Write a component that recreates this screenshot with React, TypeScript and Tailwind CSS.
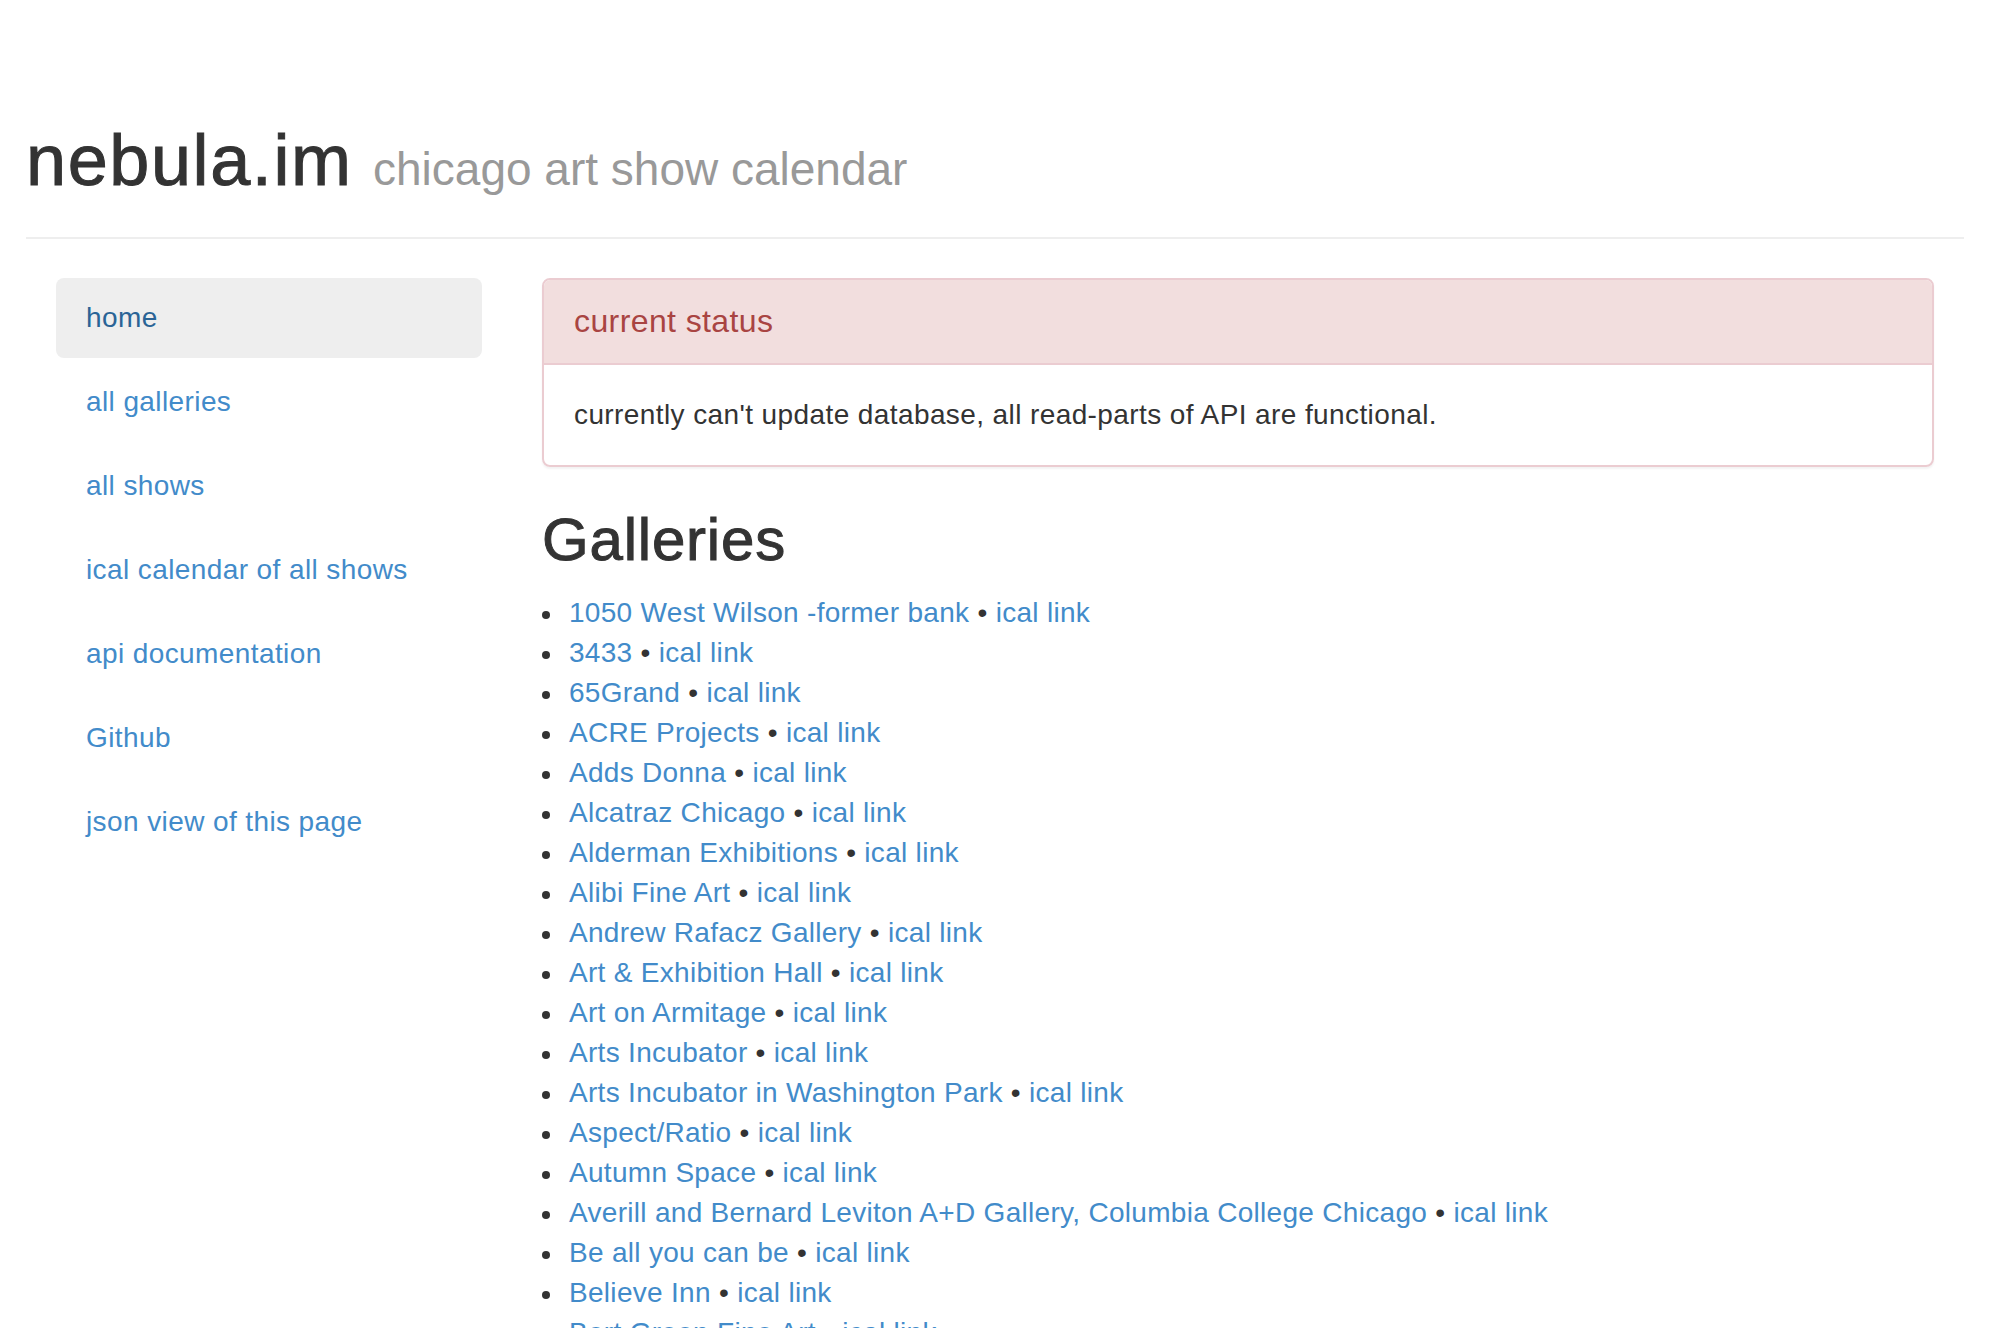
const navItems = [
  { label: "home", active: true },
  { label: "all galleries" },
  { label: "all shows" },
  { label: "ical calendar of all shows" },
  { label: "api documentation" },
  { label: "Github" },
  { label: "json view of this page" },
];

const galleries = [
  "1050 West Wilson -former bank",
  "3433",
  "65Grand",
  "ACRE Projects",
  "Adds Donna",
  "Alcatraz Chicago",
  "Alderman Exhibitions",
  "Alibi Fine Art",
  "Andrew Rafacz Gallery",
  "Art & Exhibition Hall",
  "Art on Armitage",
  "Arts Incubator",
  "Arts Incubator in Washington Park",
  "Aspect/Ratio",
  "Autumn Space",
  "Averill and Bernard Leviton A+D Gallery, Columbia College Chicago",
  "Be all you can be",
  "Believe Inn",
  "Bert Green Fine Art",
  "Blanc Gallery",
  "Bridgeport Art Center",
];

export default function App() {
  return (
    <div className="min-h-screen bg-white font-['Liberation_Sans',Helvetica,Arial,sans-serif] text-[28px] leading-[40px] tracking-[0.4px] text-[#333]">
      <div className="px-[26px]">
        <header className="pt-[121px] pb-[28px] border-b-2 border-[#eeeeee]">
          <h1 className="text-[72px] leading-[79px] font-normal">
            <span className="tracking-[1.6px] [-webkit-text-stroke:1px_#333]">nebula.im</span>{" "}
            <small className="text-[46px] tracking-normal text-[#999]">
              chicago art show calendar
            </small>
          </h1>
        </header>

        <div className="flex mt-[39px]">
          <nav className="w-[486px] shrink-0 px-[30px]">
            <ul className="flex flex-col gap-[4px]">
              {navItems.map((item) => (
                <li key={item.label}>
                  <a
                    href="#"
                    className={
                      item.active
                        ? "block rounded-[8px] bg-[#eeeeee] px-[30px] py-[20px] text-[#2a6496]"
                        : "block rounded-[8px] px-[30px] py-[20px] text-[#428bca]"
                    }
                  >
                    {item.label}
                  </a>
                </li>
              ))}
            </ul>
          </nav>

          <main className="flex-1 px-[30px]">
            <div className="rounded-[8px] border-2 border-[#ebccd1] shadow-[0_2px_2px_rgba(0,0,0,0.05)]">
              <div className="rounded-t-[6px] border-b-2 border-[#ebccd1] bg-[#f2dede] px-[30px] py-[24px]">
                <h3 className="text-[32px] leading-[35px] text-[#a94442]">current status</h3>
              </div>
              <div className="px-[30px] py-[30px]">
                currently can't update database, all read-parts of API are functional.
              </div>
            </div>

            <h2 className="mt-[40px] mb-[20px] text-[60px] leading-[66px] tracking-[0.8px] [-webkit-text-stroke:1px_#333]">
              Galleries
            </h2>

            <ul className="tracking-[0.3px]">
              {galleries.map((name) => (
                <li key={name}>
                  <span className="inline-block w-[8px] h-[8px] rounded-full bg-[#333] align-middle mr-[19px]" />
                  <a href="#" className="text-[#428bca]">
                    {name}
                  </a>{" "}
                  •{" "}
                  <a href="#" className="text-[#428bca]">
                    ical link
                  </a>
                </li>
              ))}
            </ul>
          </main>
        </div>
      </div>
    </div>
  );
}
